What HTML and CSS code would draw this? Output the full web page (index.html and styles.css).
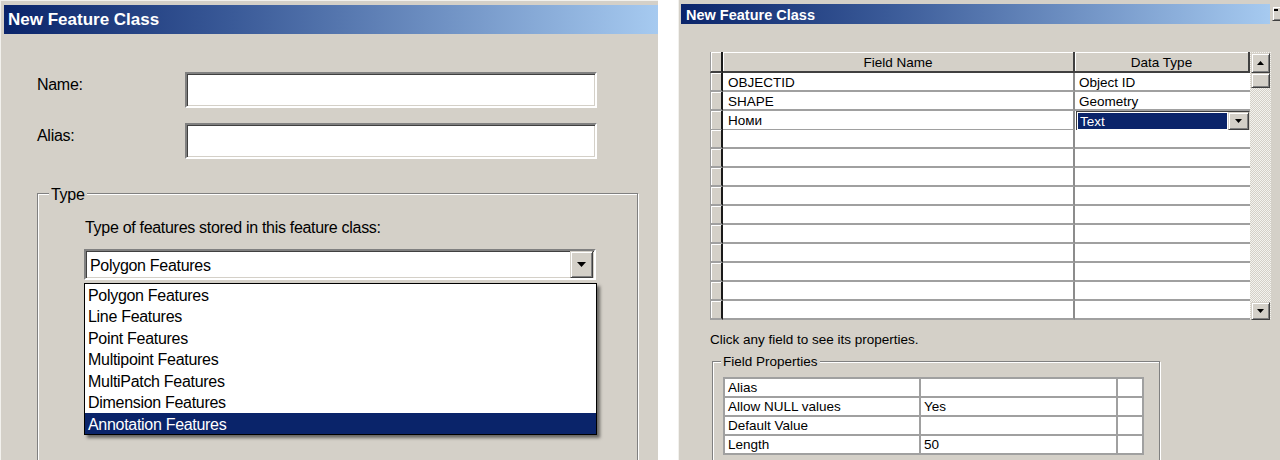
FILE: index.html
```html
<!DOCTYPE html>
<html>
<head>
<meta charset="utf-8">
<title>New Feature Class</title>
<link rel="stylesheet" href="styles.css">
</head>
<body>
<div class="screen">
  <section class="win win-left">
    <div class="titlebar tb-left">New Feature Class</div>
    <div class="left-body">
      <div class="form-row"><span class="lbl">Name:</span><div class="textbox"></div></div>
      <div class="form-row"><span class="lbl">Alias:</span><div class="textbox"></div></div>
      <div class="group type-group">
        <span class="group-title">Type</span>
        <p class="desc">Type of features stored in this feature class:</p>
        <div class="combo">
          <span class="combo-text">Polygon Features</span>
          <span class="btn combo-btn"><svg width="9" height="5" viewBox="0 0 9 5"><polygon points="0,0 9,0 4.5,5" fill="#000"/></svg></span>
        </div>
        <ul class="droplist">
          <li>Polygon Features</li>
          <li>Line Features</li>
          <li>Point Features</li>
          <li>Multipoint Features</li>
          <li>MultiPatch Features</li>
          <li>Dimension Features</li>
          <li class="sel">Annotation Features</li>
        </ul>
      </div>
    </div>
  </section>

  <section class="win win-right">
    <div class="titlerow">
      <div class="titlebar tb-right">New Feature Class</div>
      <span class="btn cap-btn"><span class="cap-mark"></span></span>
    </div>
    <div class="right-body">
      <div class="grid">
        <div class="gtable">
          <div class="grow head"><span class="rh"></span><span class="cell name">Field Name</span><span class="cell type">Data Type</span></div>
          <div class="grow"><span class="rh"></span><span class="cell name">OBJECTID</span><span class="cell type">Object ID</span></div>
          <div class="grow"><span class="rh"></span><span class="cell name">SHAPE</span><span class="cell type">Geometry</span></div>
          <div class="grow"><span class="rh"></span><span class="cell name">Номи</span><span class="cell type editing"><span class="edit"><span class="edit-val">Text</span><span class="btn edit-btn"><svg width="7" height="4" viewBox="0 0 7 4"><polygon points="0,0 7,0 3.5,4" fill="#000"/></svg></span></span></span></div>
          <div class="grow"><span class="rh"></span><span class="cell name"></span><span class="cell type"></span></div>
          <div class="grow"><span class="rh"></span><span class="cell name"></span><span class="cell type"></span></div>
          <div class="grow"><span class="rh"></span><span class="cell name"></span><span class="cell type"></span></div>
          <div class="grow"><span class="rh"></span><span class="cell name"></span><span class="cell type"></span></div>
          <div class="grow"><span class="rh"></span><span class="cell name"></span><span class="cell type"></span></div>
          <div class="grow"><span class="rh"></span><span class="cell name"></span><span class="cell type"></span></div>
          <div class="grow"><span class="rh"></span><span class="cell name"></span><span class="cell type"></span></div>
          <div class="grow"><span class="rh"></span><span class="cell name"></span><span class="cell type"></span></div>
          <div class="grow"><span class="rh"></span><span class="cell name"></span><span class="cell type"></span></div>
          <div class="grow"><span class="rh"></span><span class="cell name"></span><span class="cell type"></span></div>
        </div>
        <div class="vscroll">
          <span class="btn sb-btn"><svg width="7" height="4" viewBox="0 0 7 4"><polygon points="0,4 7,4 3.5,0" fill="#000"/></svg></span>
          <span class="btn sb-thumb"></span>
          <span class="btn sb-btn sb-down"><svg width="7" height="4" viewBox="0 0 7 4"><polygon points="0,0 7,0 3.5,4" fill="#000"/></svg></span>
        </div>
      </div>
      <p class="hint">Click any field to see its properties.</p>
      <div class="group props-group">
        <span class="group-title">Field Properties</span>
        <div class="ptable">
          <div class="prow"><span class="pc">Alias</span><span class="pc"></span><span class="pc"></span></div>
          <div class="prow"><span class="pc">Allow NULL values</span><span class="pc">Yes</span><span class="pc"></span></div>
          <div class="prow"><span class="pc">Default Value</span><span class="pc"></span><span class="pc"></span></div>
          <div class="prow"><span class="pc">Length</span><span class="pc">50</span><span class="pc"></span></div>
        </div>
      </div>
    </div>
  </section>
</div>
</body>
</html>
```

FILE: styles.css
```css
* { box-sizing: border-box; }
html, body { margin: 0; padding: 0; }
body {
  width: 1280px;
  height: 460px;
  overflow: hidden;
  background: #fff;
  font-family: "Liberation Sans", Arial, sans-serif;
  color: #000;
}
.screen { display: flex; gap: 20px; height: 460px; }
.win { background: #d4d0c8; height: 460px; overflow: hidden; flex-shrink: 0; }

.titlebar {
  background: linear-gradient(to right, #0a246a 0%, #3a5a98 35%, #a6caf0 100%);
  color: #fff;
  font-weight: bold;
  display: flex;
  align-items: center;
  white-space: nowrap;
}
.btn {
  background: #d4d0c8;
  border: 1px solid;
  border-color: #d4d0c8 #404040 #404040 #d4d0c8;
  box-shadow: inset 1px 1px 0 #fff, inset -1px -1px 0 #808080;
  display: flex;
  align-items: center;
  justify-content: center;
  flex-shrink: 0;
}

/* ---------- left window ---------- */
.win-left {
  width: 658px;
  padding: 5px 0 0 4px;
  box-shadow: inset 1px 1px 0 #f2f1ed;
}
.tb-left { height: 29px; font-size: 17px; padding: 1px 0 0 4px; }
.left-body {
  padding: 38px 0 0 33px;
  font-size: 16px;
  letter-spacing: -0.3px;
}
.form-row { display: flex; align-items: flex-start; }
.form-row + .form-row { margin-top: 15px; }
.lbl { width: 148px; line-height: 20px; margin-top: 3px; }
.textbox {
  width: 412px;
  height: 36px;
  background: #fff;
  border: 2px solid;
  border-color: #808080 #fff #fff #808080;
  box-shadow: inset 1px 1px 0 #404040, inset -1px -1px 0 #d4d0c8;
}
.group {
  position: relative;
  border: 1px solid #808080;
  box-shadow: inset 1px 1px 0 #fff, 1px 1px 0 #fff;
}
.group-title {
  position: absolute;
  left: 11px;
  top: -9px;
  padding: 0 2px;
  line-height: 20px;
  background: #d4d0c8;
}
.type-group {
  margin-top: 34px;
  width: 601px;
  height: 320px;
  padding: 24px 0 0 47px;
}
.desc { margin: 0; line-height: 20px; }
.combo {
  margin: 11px 0 0 -1px;
  width: 512px;
  height: 31px;
  background: #fff;
  display: flex;
  align-items: center;
  border: 2px solid;
  border-color: #808080 #fff #fff #808080;
  box-shadow: inset 1px 1px 0 #404040, inset -1px -1px 0 #d4d0c8;
}
.combo-text { padding: 2px 0 0 4px; }
.combo-btn { margin-left: auto; margin-right: 1px; width: 23px; height: 27px; }
.droplist {
  list-style: none;
  margin: 3px 0 0 -1px;
  padding: 0;
  width: 513px;
  height: 152px;
  background: #fff;
  border: 1px solid #000;
  box-shadow: 3px 3px 3px rgba(0, 0, 0, 0.5);
}
.droplist li { height: 21.43px; line-height: 18.43px; padding: 3px 0 0 3px; }
.droplist li.sel { background: #0a246a; color: #fff; }

/* ---------- right window ---------- */
.win-right {
  width: 602px;
  padding: 4px 0 0 3px;
  box-shadow: inset 1px 0 0 #f2f1ed;
}
.titlerow { display: flex; align-items: flex-start; }
.tb-right { flex: 1; height: 20px; font-size: 14.5px; padding: 1px 0 0 5px; }
.cap-btn { width: 16px; height: 15px; margin: 2px -8px 0 2px; justify-content: flex-start; align-items: flex-start; padding: 2px 0 0 1px; }
.cap-mark { width: 4px; height: 2px; background: #000; }

.right-body { padding: 28px 0 0 29px; font-size: 13.5px; }
.grid { display: flex; width: 561px; }
.gtable { width: 540px; }
.grow { display: grid; grid-template-columns: 13px 352px 175px; height: 19px; }
.grow.head { height: 21px; }
.rh {
  background: #d4d0c8;
  border-left: 1px solid #9a9a9a;
  border-right: 2px solid #1a1a1a;
  border-bottom: 2px solid #a0a0a0;
  box-shadow: inset 1px 1px 0 #fff;
}
.cell {
  background: #fff;
  border-bottom: 2px solid #a0a0a0;
  padding-top: 3px;
  line-height: 14px;
  white-space: nowrap;
  overflow: hidden;
}
.cell.name { padding-left: 5px; border-right: 2px solid #8c8c8c; }
.cell.type { padding-left: 4px; }
.head .rh { border-bottom-color: #404040; }
.head .cell {
  background: #d4d0c8;
  text-align: center;
  padding-left: 0;
  padding-top: 2px;
  line-height: 17px;
  border-bottom: 2px solid #404040;
  border-right: 2px solid #404040;
  box-shadow: inset 1px 1px 0 #fff;
}
.cell.editing { padding: 0; border-bottom: none; overflow: visible; }
.edit {
  display: flex;
  height: 20px;
  width: 174px;
  margin-left: 1px;
  border: 1px solid #404040;
  border-right-color: #d4d0c8;
  border-bottom-color: #d4d0c8;
  background: #fff;
}
.edit-val {
  flex: 1;
  margin: 1px;
  background: #0a246a;
  color: #fff;
  padding: 2px 0 0 2px;
  line-height: 14px;
}
.edit-btn { width: 21px; height: 18px; }

.vscroll {
  width: 21px;
  height: 268px;
  display: flex;
  flex-direction: column;
  padding: 1px 1px 0 1px;
  background-color: #ffffff;
  background-image: repeating-conic-gradient(#d4d0c8 0 25%, #f4f3ef 0 50%);
  background-size: 2px 2px;
}
.sb-btn { width: 19px; height: 20px; }
.sb-thumb { width: 19px; height: 15px; }
.sb-down { margin-top: auto; height: 18px; }

.hint { margin: 12px 0 0; line-height: 16px; }
.props-group {
  margin: 13px 0 0 2px;
  width: 448px;
  height: 200px;
  padding: 15px 0 0 10px;
}
.props-group .group-title { left: 8px; top: -8px; line-height: 16px; }
.ptable { width: 421px; border-top: 2px solid #a0a0a0; border-left: 2px solid #a0a0a0; background: #fff; }
.prow { display: grid; grid-template-columns: 196px 197px 26px; height: 19px; }
.pc {
  border-right: 2px solid #a0a0a0;
  border-bottom: 2px solid #a0a0a0;
  line-height: 17px;
  padding-left: 3px;
  white-space: nowrap;
}
```
